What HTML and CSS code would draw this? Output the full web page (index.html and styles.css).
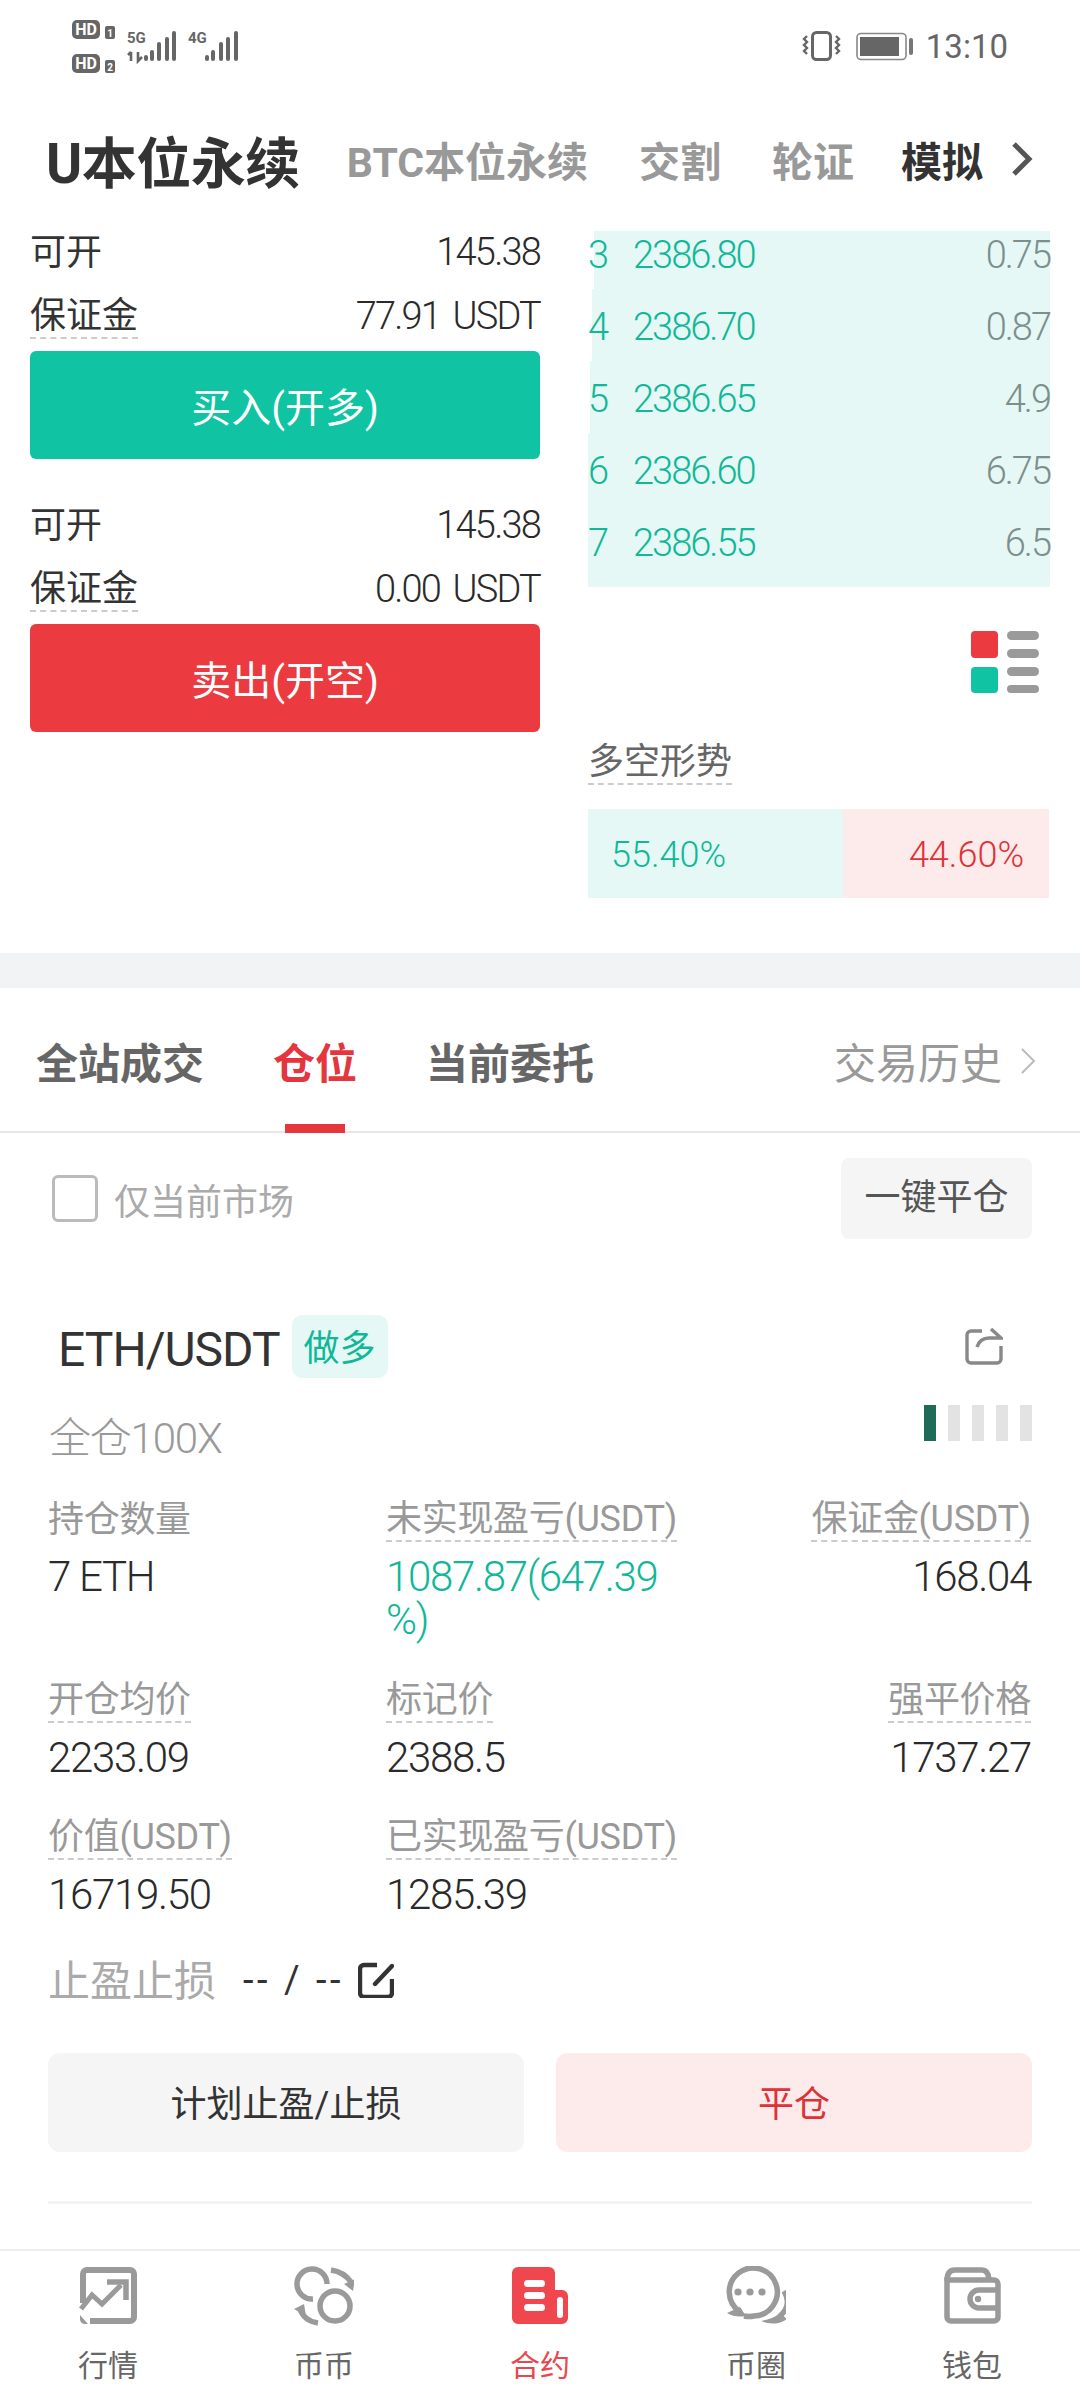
FILE: index.html
```html
<!DOCTYPE html>
<html lang="zh-CN">
<head>
  <meta charset="UTF-8">
  <title>U本位永续</title>
  <link rel="stylesheet" href="styles.css">
</head>
<body>
<div class="page">

  <div class="status">
    <svg class="status-left" width="170" height="60" viewBox="70 17 170 60">
      <rect x="72" y="20" width="28" height="19" rx="5" class="ic"/>
      <text x="86" y="35" class="hd">HD</text>
      <rect x="105" y="26" width="10" height="13" rx="2" class="ic"/>
      <text x="110" y="37" class="sim">1</text>
      <rect x="72" y="54" width="28" height="19" rx="5" class="ic"/>
      <text x="86" y="69" class="hd">HD</text>
      <rect x="105" y="60" width="10" height="13" rx="2" class="ic"/>
      <text x="110" y="71" class="sim">2</text>
      <text x="127" y="43" class="net">5G</text>
      <path d="M131 52v9M128 55l3-3M138 52v9l4-4" class="arrows"/>
      <rect x="144" y="55" width="4" height="6" rx="2" class="ic"/>
      <rect x="150" y="50" width="4" height="11" rx="2" class="ic"/>
      <rect x="157" y="42" width="4" height="19" rx="2" class="ic"/>
      <rect x="165" y="37" width="4" height="24" rx="2" class="ic"/>
      <rect x="172" y="31" width="4" height="30" rx="2" class="ic"/>
      <text x="188" y="43" class="net">4G</text>
      <rect x="205" y="55" width="4" height="6" rx="2" class="ic"/>
      <rect x="211" y="50" width="4" height="11" rx="2" class="ic"/>
      <rect x="219" y="42" width="4" height="19" rx="2" class="ic"/>
      <rect x="226" y="37" width="4" height="24" rx="2" class="ic"/>
      <rect x="234" y="31" width="4" height="30" rx="2" class="ic"/>
    </svg>
    <div class="status-right">
      <svg width="112" height="36" viewBox="804 28 112 36">
        <rect x="814.5" y="32.5" width="18" height="27" rx="4" fill="none" stroke="#666" stroke-width="3"/>
        <path d="M809 36l-3 3 3 3-3 3 3 3-3 3 3 3M838 36l3 3-3 3 3 3-3 3 3 3-3 3" fill="none" stroke="#666" stroke-width="2.4"/>
        <rect x="859" y="33.5" width="49" height="26" rx="4" fill="none" stroke="#888" stroke-width="1.6"/>
        <rect x="862" y="37" width="39" height="19" fill="#666"/>
        <rect x="911" y="38" width="4" height="17" rx="2" fill="#777"/>
      </svg>
      <span class="clock">13:10</span>
    </div>
  </div>

  <div class="head">
    <span class="head-title">U本位永续</span>
    <span class="head-tab">BTC本位永续</span>
    <span class="head-tab">交割</span>
    <span class="head-tab">轮证</span>
    <span class="head-tab head-dark">模拟</span>
    <svg class="head-more" width="24" height="34" viewBox="0 0 24 34"><path d="M4 2l15 15L4 32" fill="none" stroke="#555" stroke-width="5"/></svg>
  </div>

  <div class="trade">
    <div class="forms">
      <div class="kv"><span>可开</span><span class="num">145.38</span></div>
      <div class="kv kv-low"><span class="dash">保证金</span><span class="num">77.91 USDT</span></div>
      <div class="action action-buy">买入(开多)</div>

      <div class="kv kv-next"><span>可开</span><span class="num">145.38</span></div>
      <div class="kv kv-low"><span class="dash">保证金</span><span class="num">0.00 USDT</span></div>
      <div class="action action-sell">卖出(开空)</div>
    </div>

    <div class="side">
      <div class="book">
        <div class="book-row" style="--depth:98.7%"><span class="book-n">3</span><span class="book-p">2386.80</span><span class="book-q">0.75</span></div>
        <div class="book-row" style="--depth:99.2%"><span class="book-n">4</span><span class="book-p">2386.70</span><span class="book-q">0.87</span></div>
        <div class="book-row" style="--depth:99.6%"><span class="book-n">5</span><span class="book-p">2386.65</span><span class="book-q">4.9</span></div>
        <div class="book-row" style="--depth:100%"><span class="book-n">6</span><span class="book-p">2386.60</span><span class="book-q">6.75</span></div>
        <div class="book-row" style="--depth:100%"><span class="book-n">7</span><span class="book-p">2386.55</span><span class="book-q">6.5</span></div>
      </div>
      <svg class="book-mode" width="68" height="62" viewBox="0 0 68 62">
        <rect width="27" height="27" rx="4" fill="#ec3b40"/>
        <rect y="36" width="27" height="26" rx="4" fill="#10c3a2"/>
        <rect x="36" width="32" height="9" rx="4.5" fill="#9a9a9a"/>
        <rect x="36" y="18" width="32" height="9" rx="4.5" fill="#9a9a9a"/>
        <rect x="36" y="36" width="32" height="9" rx="4.5" fill="#9a9a9a"/>
        <rect x="36" y="54" width="32" height="8" rx="4" fill="#9a9a9a"/>
      </svg>
      <div class="trend-title"><span class="dash">多空形势</span></div>
      <div class="trend">
        <div class="trend-long">55.40%</div>
        <div class="trend-short">44.60%</div>
      </div>
    </div>
  </div>

  <div class="band"></div>

  <div class="tabs">
    <span class="tab">全站成交</span>
    <span class="tab tab-on">仓位</span>
    <span class="tab">当前委托</span>
    <span class="tab-history">交易历史</span>
    <svg width="16" height="26" viewBox="0 0 16 26"><path d="M2 1l12 12L2 25" fill="none" stroke="#bbb" stroke-width="2"/></svg>
  </div>

  <div class="filter">
    <span class="check"></span>
    <span class="filter-label">仅当前市场</span>
    <span class="close-all">一键平仓</span>
  </div>

  <div class="pos-head">
    <span class="pos-name">ETH/USDT</span>
    <span class="pos-side">做多</span>
    <svg class="pos-share" width="38" height="37" viewBox="0 0 38 37">
      <path d="M17 3H6a4 4 0 0 0-4 4v24a4 4 0 0 0 4 4h26a4 4 0 0 0 4-4V18" fill="none" stroke="#888" stroke-width="3.4"/>
      <path d="M12 19c2-6 6-9 12-9h12L26 1" fill="none" stroke="#888" stroke-width="3.4"/>
    </svg>
  </div>

  <div class="pos-mode">
    <span class="pos-lev">全仓100X</span>
    <div class="risk">
      <i class="risk-on"></i><i></i><i></i><i></i><i></i>
    </div>
  </div>

  <div class="stats">
    <div class="stat">
      <div class="stat-k"><span class="plain">持仓数量</span></div>
      <div class="stat-v">7 ETH</div>
    </div>
    <div class="stat">
      <div class="stat-k"><span class="dash">未实现盈亏(USDT)</span></div>
      <div class="stat-v up">1087.87(647.39<br>%)</div>
    </div>
    <div class="stat stat-end">
      <div class="stat-k"><span class="dash">保证金(USDT)</span></div>
      <div class="stat-v">168.04</div>
    </div>
    <div class="stat">
      <div class="stat-k"><span class="dash">开仓均价</span></div>
      <div class="stat-v">2233.09</div>
    </div>
    <div class="stat">
      <div class="stat-k"><span class="dash">标记价</span></div>
      <div class="stat-v">2388.5</div>
    </div>
    <div class="stat stat-end">
      <div class="stat-k"><span class="dash">强平价格</span></div>
      <div class="stat-v">1737.27</div>
    </div>
    <div class="stat">
      <div class="stat-k"><span class="dash">价值(USDT)</span></div>
      <div class="stat-v">16719.50</div>
    </div>
    <div class="stat">
      <div class="stat-k"><span class="dash">已实现盈亏(USDT)</span></div>
      <div class="stat-v">1285.39</div>
    </div>
  </div>

  <div class="stop">
    <span class="stop-k">止盈止损</span>
    <span class="stop-v">-- / --</span>
    <svg width="36" height="36" viewBox="0 0 36 36">
      <path d="M19 3H6a4 4 0 0 0-4 4v24a4 4 0 0 0 4 4h24a4 4 0 0 0 4-4V17" fill="none" stroke="#333" stroke-width="4.4"/>
      <path d="M17 22L34 4" fill="none" stroke="#333" stroke-width="4.4" stroke-linecap="round"/>
    </svg>
  </div>

  <div class="btns">
    <div class="btn">计划止盈/止损</div>
    <div class="btn btn-red">平仓</div>
  </div>

  <div class="rule"></div>

  <div class="nav">
    <div class="nav-item">
      <svg width="60" height="60" viewBox="0 0 60 60" fill="none" stroke="#9a9a9a" stroke-width="6">
        <path d="M5 37V8a4 4 0 0 1 4-4h43a4 4 0 0 1 4 4v43a4 4 0 0 1-4 4H12"/>
        <path d="M3 43L14 29l10 9 19-19" stroke-width="5"/>
        <path d="M29 16h19v18" stroke-width="5.5"/>
        <path d="M2 49l8 9H6q-4-1-4-5z" fill="#9a9a9a" stroke="none"/>
      </svg>
      <span>行情</span>
    </div>
    <div class="nav-item">
      <svg width="60" height="60" viewBox="0 0 60 60" fill="none" stroke="#9a9a9a" stroke-width="5.5">
        <circle cx="41" cy="40" r="15"/>
        <path d="M33 18A15 15 0 1 0 19 33"/>
        <path d="M37 4q13 2 20 12"/>
        <path d="M50 18l11-5-2 12z" fill="#9a9a9a" stroke="none"/>
        <path d="M6 43q4 12 18 14"/>
        <path d="M0 43l10-5 2 12z" fill="#9a9a9a" stroke="none"/>
      </svg>
      <span>币币</span>
    </div>
    <div class="nav-item nav-on">
      <svg width="60" height="60" viewBox="0 0 60 60">
        <path d="M8 1h31a6 6 0 0 1 6 6v17h7a6 6 0 0 1 6 6v22a6 6 0 0 1-6 6H8a6 6 0 0 1-6-6V7a6 6 0 0 1 6-6z" fill="#f0474e"/>
        <rect x="14" y="14" width="21" height="7" rx="3.5" fill="#fff"/>
        <rect x="14" y="26" width="21" height="7" rx="3.5" fill="#fff"/>
        <rect x="14" y="38" width="21" height="7" rx="3.5" fill="#fff"/>
        <rect x="47" y="31" width="6" height="21" rx="3" fill="#fff"/>
      </svg>
      <span>合约</span>
    </div>
    <div class="nav-item">
      <svg width="60" height="60" viewBox="0 0 60 60" fill="none" stroke="#9a9a9a" stroke-width="5.5">
        <path d="M14 46A24 24 0 1 1 28 50q-5 1-10 0"/>
        <path d="M1 47l13-6 6 9q-11 2-19-3z" fill="#9a9a9a" stroke="none"/>
        <path d="M58 25c5 8 5 17-4 25"/>
        <path d="M35 55q12-2 19-8l7 6q-12 8-26 2z" fill="#9a9a9a" stroke="none"/>
        <circle cx="12" cy="26" r="3.6" fill="#9a9a9a" stroke="none"/>
        <circle cx="24" cy="26" r="3.6" fill="#9a9a9a" stroke="none"/>
        <circle cx="36" cy="26" r="3.6" fill="#9a9a9a" stroke="none"/>
      </svg>
      <span>币圈</span>
    </div>
    <div class="nav-item">
      <svg width="60" height="60" viewBox="0 0 60 60" fill="none" stroke="#9a9a9a" stroke-width="5.5">
        <path d="M5 15q0-11 8-11h27q6 0 7 9"/>
        <path d="M5 14h47a4 4 0 0 1 4 4v33a4 4 0 0 1-4 4H9a4 4 0 0 1-4-4z"/>
        <path d="M56 24H37a9 9 0 0 0 0 18h19"/>
        <circle cx="36" cy="33" r="3.2" fill="#9a9a9a" stroke="none"/>
      </svg>
      <span>钱包</span>
    </div>
  </div>

</div>
</body>
</html>
```

FILE: styles.css
```css
* {
  box-sizing: border-box;
}

body {
  margin: 0;
  background: #fff;
  color: #333;
  font-family: Roboto, "Noto Sans CJK SC", sans-serif;
  font-size: 36px;
}

.page {
  width: 1080px;
  height: 2400px;
  display: flex;
  flex-direction: column;
  overflow: hidden;
}

/* status bar */
.status {
  height: 94px;
  flex: none;
  display: flex;
  justify-content: space-between;
  padding: 17px 72px 0 70px;
}
.status-right {
  display: flex;
  align-items: flex-start;
  gap: 12px;
  padding-top: 11px;
}
.ic { fill: #666; }
.hd {
  fill: #fff;
  font-size: 16px;
  font-weight: 700;
  text-anchor: middle;
}
.sim {
  fill: #fff;
  font-size: 10px;
  font-weight: 700;
  text-anchor: middle;
}
.net {
  fill: #666;
  font-size: 15px;
  font-weight: 700;
}
.arrows {
  fill: none;
  stroke: #666;
  stroke-width: 2.6;
}
.clock {
  font-size: 33px;
  line-height: 38px;
  color: #666;
}

/* market tabs */
.head {
  height: 137px;
  flex: none;
  display: flex;
  align-items: center;
  gap: 51px;
  padding: 0 0 7px 46px;
  font-weight: 700;
}
.head-title {
  margin-right: -4px;
  font-size: 55px;
  color: #333;
  letter-spacing: -.5px;
}
.head-tab {
  font-size: 41px;
  color: #999;
}
.head-tab.head-dark {
  margin-left: -4px;
  color: #333;
}
.head-more {
  margin-left: -24px;
}

/* order forms + book */
.trade {
  height: 722px;
  flex: none;
  display: flex;
  gap: 48px;
  padding-left: 30px;
}
.forms {
  width: 510px;
}
.kv {
  display: flex;
  justify-content: space-between;
  align-items: flex-start;
  height: 38px;
  line-height: 44px;
}
.kv-low {
  margin-top: 26px;
  height: 44px;
}
.kv-next {
  margin-top: 45px;
}
.num {
  margin-top: -1px;
  font-size: 38px;
  font-weight: 300;
  color: #2a2a2a;
  letter-spacing: -1.8px;
  word-spacing: 5px;
}
.dash {
  display: inline-block;
  line-height: 42px;
  border-bottom: 2px dashed #ccc;
}
.action {
  height: 108px;
  margin-top: 12px;
  padding-top: 8px;
  border-radius: 6px;
  color: #fff;
  font-size: 40px;
  line-height: 100px;
  text-align: center;
}
.action-buy { background: #10c3a2; }
.action-sell { background: #ec3b40; }

.side {
  width: 462px;
}
.book {
  height: 356px;
}
.book-row {
  display: flex;
  height: 72px;
  padding-top: 2px;
  line-height: 72px;
  background: linear-gradient(#e5f8f5, #e5f8f5) right / var(--depth) 100% no-repeat;
  font-size: 38px;
  font-weight: 300;
  letter-spacing: -2px;
}
.book-row:first-child {
  height: 58px;
  line-height: 44px;
}
.book-row:last-child {
  height: 82px;
}
.book-n {
  width: 45px;
  color: #10b898;
}
.book-p {
  color: #10b898;
}
.book-q {
  margin-left: auto;
  color: #7d8e8c;
}
.book-mode {
  display: block;
  margin: 44px 11px 0 auto;
}
.trend-title {
  display: flex;
  margin-top: 48px;
  color: #666;
}
.trend {
  display: flex;
  height: 89px;
  margin: 24px 1px 0 0;
  line-height: 93px;
  font-weight: 300;
}
.trend-long {
  width: 255px;
  padding-left: 23px;
  background: #e5f8f5;
  color: #10b898;
}
.trend-short {
  flex: 1;
  padding-right: 25px;
  background: #fdeaea;
  color: #dc3238;
  text-align: right;
}

.band {
  height: 35px;
  flex: none;
  background: #f2f3f5;
}

/* position tabs */
.tabs {
  position: relative;
  height: 145px;
  flex: none;
  display: flex;
  align-items: center;
  gap: 69px;
  padding: 2px 44px 0 36px;
  border-bottom: 2px solid #e6e6e6;
}
.tab {
  font-size: 42px;
  font-weight: 700;
  color: #666;
}
.tab-on {
  color: #e5353d;
}
.tab-on::after {
  content: "";
  position: absolute;
  left: 285px;
  bottom: -2px;
  width: 60px;
  height: 9px;
  background: #e5353d;
}
.tab-history {
  margin-left: auto;
  margin-right: -51px;
  font-size: 42px;
  color: #999;
}

.filter {
  flex: none;
  display: flex;
  align-items: center;
  margin-top: 25px;
  padding: 0 48px 0 52px;
}
.check {
  width: 46px;
  height: 47px;
  border: 3px solid #bbb;
  border-radius: 6px;
}
.filter-label {
  margin-left: 16px;
  color: #aaa;
}
.close-all {
  margin-left: auto;
  width: 191px;
  height: 81px;
  border-radius: 8px;
  background: #f5f5f5;
  color: #555;
  line-height: 81px;
  text-align: center;
}

/* position card */
.pos-head {
  flex: none;
  display: flex;
  align-items: center;
  margin-top: 76px;
  padding: 0 77px 0 58px;
}
.pos-name {
  padding-top: 6px;
  font-size: 48px;
  letter-spacing: -1px;
}
.pos-side {
  width: 96px;
  height: 63px;
  margin-left: 12px;
  padding-top: 6px;
  border-radius: 10px;
  background: #e5f8f5;
  color: #10b898;
  line-height: 57px;
  text-align: center;
}
.pos-share {
  margin-left: auto;
}
.pos-mode {
  flex: none;
  display: flex;
  justify-content: space-between;
  align-items: flex-start;
  margin-top: 27px;
  padding: 0 48px 0 49px;
}
.pos-lev {
  margin-top: 9px;
  font-size: 42px;
  font-weight: 300;
  line-height: 50px;
  color: #999;
  letter-spacing: -1.2px;
}
.risk {
  display: flex;
  gap: 12px;
}
.risk i {
  width: 12px;
  height: 36px;
  background: #e3e3e3;
}
.risk i.risk-on {
  background: #1f6b58;
}

.stats {
  flex: none;
  display: grid;
  grid-template-columns: 338px 300px 1fr;
  row-gap: 37.5px;
  margin-top: 34px;
  padding: 0 49px 0 48px;
}
.stat-k {
  display: flex;
  color: #999;
  letter-spacing: -.3px;
}
.plain {
  line-height: 44px;
}
.stat-v {
  margin-top: 13px;
  font-size: 42px;
  font-weight: 300;
  line-height: 43px;
  color: #2a2a2a;
  letter-spacing: -1.3px;
}
.stat-v.up {
  color: #10b898;
}
.stat-end {
  text-align: right;
}
.stat-end .stat-k {
  justify-content: flex-end;
}

.stop {
  flex: none;
  display: flex;
  align-items: center;
  margin-top: 37px;
  padding-left: 48px;
}
.stop-k {
  padding-top: 4px;
  font-size: 42px;
  line-height: 50px;
  color: #aaa;
}
.stop-v {
  margin-left: 27px;
  margin-right: 14px;
  font-size: 38px;
  letter-spacing: 3.5px;
}

.btns {
  flex: none;
  display: flex;
  gap: 32px;
  margin-top: 46px;
  padding: 0 48px;
}
.btn {
  flex: 1;
  height: 99px;
  padding-top: 6px;
  border-radius: 12px;
  background: #f5f5f5;
  line-height: 93px;
  text-align: center;
}
.btn-red {
  background: #fdeaea;
  color: #dc3238;
}

.rule {
  flex: none;
  height: 3px;
  margin: 49px 48px 0;
  background: #f3f3f3;
}

/* bottom nav */
.nav {
  margin-top: auto;
  height: 151px;
  flex: none;
  display: flex;
  border-top: 2px solid #eee;
}
.nav-item {
  flex: 1;
  display: flex;
  flex-direction: column;
  align-items: center;
  padding-top: 15px;
  font-size: 30px;
  color: #666;
}
.nav-item span {
  margin-top: 22px;
  line-height: 36px;
}
.nav-on {
  color: #e8474e;
}
```
